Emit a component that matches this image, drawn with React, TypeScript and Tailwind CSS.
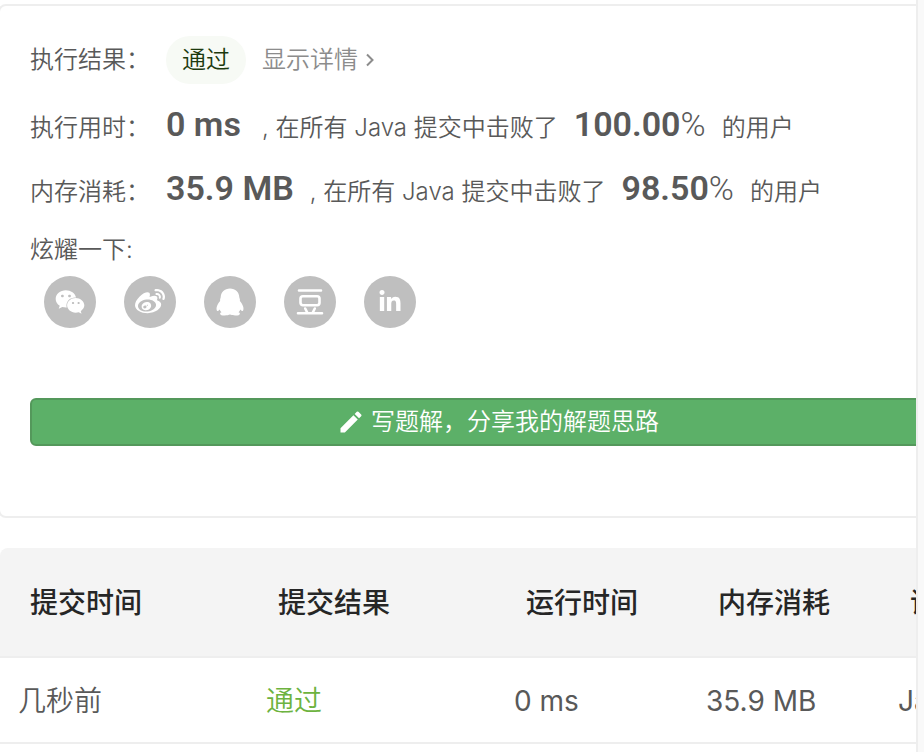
import type { ReactNode } from "react";
import { FaLinkedinIn, FaWeibo, FaWeixin } from "react-icons/fa";
import { MdEdit } from "react-icons/md";

const QqIcon = () => (
  <svg viewBox="0 0 28 28" className="size-7" fill="currentColor" aria-hidden="true">
    <path d="M14 .5C8.600 .5 4.800 4.300 4.700 9.300C4.700 10 4.200 10.500 4.100 11.200C4 11.900 4.200 12.300 4.100 12.900C2.800 14.600 1.200 16.800 .7 19C.3 21 .6 22.700 1.300 22.900C2.100 23.100 3 22.200 3.700 21.400C4 22.400 4.600 23.300 5.500 24.200C4.600 24.500 4.100 25 4.100 25.700C4.100 27 6 27.500 8.600 27.500C11 27.500 12.800 27.100 14 26.600C15.200 27.100 17 27.500 19.400 27.500C22 27.500 23.900 27 23.900 25.700C23.900 25 23.400 24.500 22.500 24.200C23.400 23.300 24 22.400 24.300 21.400C25 22.200 25.900 23.100 26.700 22.900C27.400 22.700 27.700 21 27.300 19C26.800 16.800 25.200 14.600 23.900 12.900C23.800 12.300 24 11.900 23.900 11.200C23.800 10.500 23.300 10 23.300 9.300C23.200 4.300 19.400 .5 14 .5Z" />
  </svg>
);

const DoubanIcon = () => (
  <svg
    viewBox="0 0 28 28"
    className="size-7"
    fill="none"
    stroke="currentColor"
    strokeWidth="2.6"
    strokeLinecap="round"
    strokeLinejoin="round"
    aria-hidden="true"
  >
    <path d="M3 2.500h22M2 25.300h24M9.200 20.500l2 4M18.800 20.500l-2 4" />
    <rect x="4.500" y="8.200" width="19" height="9" rx="2.400" />
  </svg>
);

const shares: { name: string; icon: ReactNode }[] = [
  { name: "微信", icon: <FaWeixin className="size-[30px]" /> },
  { name: "微博", icon: <FaWeibo className="size-[30px]" /> },
  { name: "QQ", icon: <QqIcon /> },
  { name: "豆瓣", icon: <DoubanIcon /> },
  { name: "LinkedIn", icon: <FaLinkedinIn className="size-6" /> },
];

const columns = ["提交时间", "提交结果", "运行时间", "内存消耗", "语言"];

function Metric({ label, value, percent }: { label: string; value: string; percent: string }) {
  return (
    <div className="flex h-16 items-baseline gap-4 leading-[64px]">
      <span className="w-[120px]">{label}</span>
      <span className="min-w-20 font-[Roboto] text-[34px] font-semibold">{value}</span>
      <span>, 在所有 Java 提交中击败了</span>
      <span className="font-[Roboto] text-[34px]">
        <span className="font-semibold">{percent}</span>
        <span className="font-light">%</span>
      </span>
      <span>的用户</span>
    </div>
  );
}

export default function App() {
  return (
    <div
      lang="zh-CN"
      className="flex min-h-screen bg-white font-[Inter,'Noto_Sans_CJK_SC',sans-serif] text-[#595959]"
    >
      <main className="min-w-0 flex-1 overflow-hidden pt-1">
        <div className="-ml-0.5 min-w-[1000px]">
          <section className="rounded-lg border-2 border-[#eeeeee] px-[30px] pt-[30px] pb-[70px] text-2xl font-[350] whitespace-nowrap">
            <div className="flex h-12 items-center gap-4">
              <span className="w-[120px]">执行结果：</span>
              <span className="flex h-12 items-center rounded-full bg-[#f7faf5] px-4 text-[#1d3a0f]">通过</span>
              <a href="#details" className="flex items-center gap-2 text-[#8c8c8c]">
                显示详情
                <svg viewBox="0 0 8 14" className="h-3.5 w-2" fill="none" stroke="currentColor" strokeWidth="2" aria-hidden="true">
                  <path d="M1 1.500L6.500 7L1 12.500" />
                </svg>
              </a>
            </div>
            <div className="mt-2 mb-3">
              <Metric label="执行用时：" value="0 ms" percent="100.00" />
              <Metric label="内存消耗：" value="35.9 MB" percent="98.50" />
            </div>
            <div className="h-9 leading-9">炫耀一下:</div>
            <div className="mt-2 flex gap-7 px-3.5">
              {shares.map((share) => (
                <button
                  key={share.name}
                  type="button"
                  aria-label={share.name}
                  className="flex size-[52px] items-center justify-center rounded-full bg-[#bfbfbf] text-white"
                >
                  {share.icon}
                </button>
              ))}
            </div>
            <button
              type="button"
              className="mt-[70px] flex h-12 w-full items-center justify-center gap-1.5 rounded-md border-2 border-[#54985b] bg-[#5cb068] text-white"
            >
              <MdEdit className="size-7" aria-hidden="true" />
              写题解，分享我的解题思路
            </button>
          </section>

          <table className="mt-[30px] ml-0.5 w-[996px] table-fixed border-separate border-spacing-0 text-[28px] whitespace-nowrap">
            <colgroup>
              <col className="w-[248px]" />
              <col className="w-[248px]" />
              <col className="w-[192px]" />
              <col className="w-[192px]" />
              <col />
            </colgroup>
            <thead>
              <tr className="h-[110px] text-left text-[#262626]">
                {columns.map((title) => (
                  <th
                    key={title}
                    className="border-b-2 border-[#eeeeee] bg-[#f4f4f4] pt-0.5 pl-[30px] font-medium first:rounded-tl-lg"
                  >
                    {title}
                  </th>
                ))}
              </tr>
            </thead>
            <tbody>
              <tr className="h-[86px] font-normal">
                <td className="border-b-2 border-[#eeeeee] pt-0.5 pl-[18px] font-[350]">几秒前</td>
                <td className="border-b-2 border-[#eeeeee] pt-0.5 pl-[18px] font-[350]">
                  <a href="#submission" className="text-[#6db33f]">
                    通过
                  </a>
                </td>
                <td className="border-b-2 border-[#eeeeee] pt-0.5 pl-[18px]">0 ms</td>
                <td className="border-b-2 border-[#eeeeee] pt-0.5 pl-[18px]">35.9 MB</td>
                <td className="border-b-2 border-[#eeeeee] pt-0.5 pl-[18px]">Java</td>
              </tr>
            </tbody>
          </table>
        </div>
      </main>
      <div className="w-2 shrink-0 border-l-2 border-[#eeeeee] bg-[#f9f9f9]" />
    </div>
  );
}
